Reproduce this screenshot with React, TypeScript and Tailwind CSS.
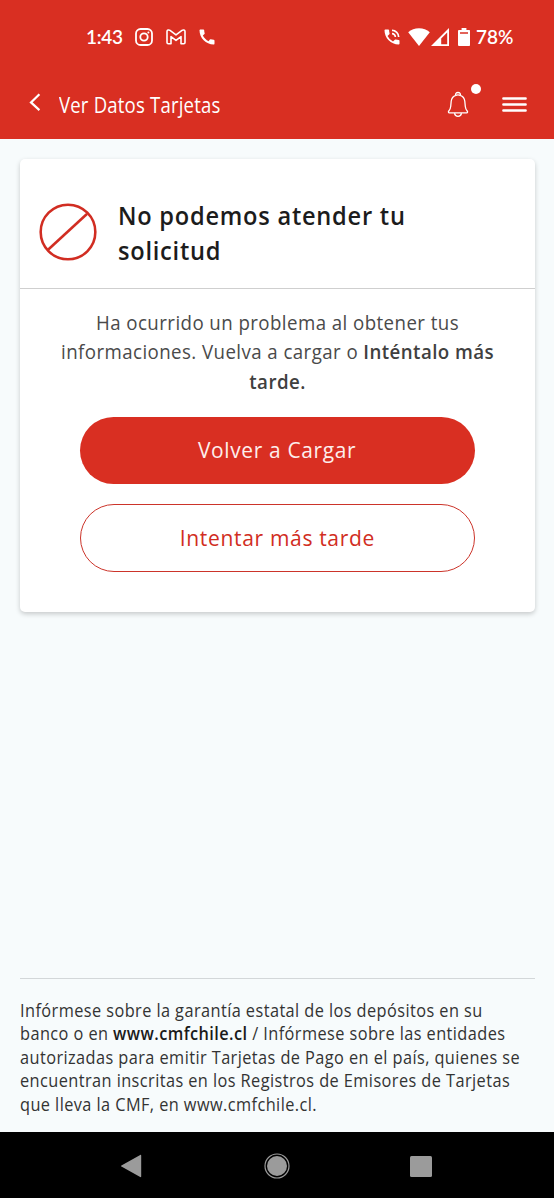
import type { ReactNode } from "react";
import { MdCall, MdPhoneInTalk } from "react-icons/md";

const NOTICE = [
  "Infórmese sobre la garantía estatal de los depósitos en su",
  <>
    banco o en <b className="font-semibold text-[#1a1a1a]">www.cmfchile.cl</b> / Infórmese sobre las entidades
  </>,
  "autorizadas para emitir Tarjetas de Pago en el país, quienes se",
  "encuentran inscritas en los Registros de Emisores de Tarjetas",
  "que lleva la CMF, en www.cmfchile.cl.",
];

function Row({ children }: { children: ReactNode }) {
  return <span className="block whitespace-nowrap">{children}</span>;
}

function StatusBar() {
  return (
    <div className="flex h-[73px] items-center pl-[86px] font-['Lato',sans-serif] text-[19px] font-semibold leading-none text-white">
      <span className="w-[49px] tracking-[-0.3px]">1:43</span>
      {/* instagram */}
      <svg className="h-[18px] w-[18px]" viewBox="0 0 18 18" fill="none" stroke="currentColor" strokeWidth="1.8">
        <rect x="1" y="1" width="16" height="16" rx="4.6" />
        <circle cx="9" cy="9" r="3.7" />
        <circle cx="13.4" cy="4.6" r="1" fill="currentColor" stroke="none" />
      </svg>
      {/* gmail */}
      <svg className="ml-[13px] h-4 w-5" viewBox="0 0 20 16" fill="none" stroke="currentColor" strokeWidth="1.6" strokeLinejoin="round">
        <path d="M1 2.500v11c0 .7.5 1.200 1.200 1.200H5V7.600l5 3.800 5-3.800v7.100h2.800c.7 0 1.200-.5 1.200-1.200v-11c0-1.500-1.800-2-3-1.100l-6 4.500-6-4.500C2.800.5 1 1 1 2.500z" />
      </svg>
      <MdCall className="ml-[11px] h-5 w-5" />
      <MdPhoneInTalk className="ml-[165px] h-5 w-5" />
      {/* wifi */}
      <svg className="ml-[6px] h-[18px] w-[22px]" viewBox="0 0 22 18" fill="currentColor">
        <path d="M11 18 .2 4.300C3.200 1.800 6.800.3 11 .3s7.800 1.500 10.800 4z" />
      </svg>
      {/* signal */}
      <svg className="ml-[1px] h-[18px] w-[18px]" viewBox="0 0 18 18">
        <path fill="currentColor" fillRule="evenodd" d="M18 0v18H0zM16.200 4.400 10.200 10.400V16.200h6z" />
      </svg>
      {/* battery */}
      <svg className="ml-[9px] h-[18px] w-[12px]" viewBox="0 0 12 19" preserveAspectRatio="none">
        <path fill="currentColor" fillRule="evenodd" d="M3.600 0h4.800v2H11c.6 0 1 .4 1 1v15c0 .6-.4 1-1 1H1c-.6 0-1-.4-1-1V3c0-.6.4-1 1-1h2.600zM2 4.500v1.500h8V4.500z" />
      </svg>
      <span className="ml-[6px]">78%</span>
    </div>
  );
}

function AppHeader() {
  return (
    <div className="flex h-[66px] items-start text-white">
      <svg className="ml-[29px] mt-[20px] h-[18px] w-[12px]" viewBox="0 0 12 18" fill="none" stroke="currentColor" strokeWidth="2.2">
        <path d="M10.400 1.200 2 9.400l8.400 7.700" />
      </svg>
      <h1 className="ml-[18px] mt-[17px] w-[388px] origin-left scale-x-[.885] text-[21px] leading-[30px] tracking-[0.2px]">
        Ver Datos Tarjetas
      </h1>
      <div className="relative">
        <svg className="mt-[18px] h-[27px] w-[22px]" viewBox="0 0 22 27" fill="none" stroke="currentColor" strokeWidth="1.3" strokeLinejoin="round">
          <path d="M8.800 4.300C6 5.200 4.500 7.400 4.200 10.200l-.5 5.300c-.2 2-.6 3-1.900 4.500-.6.700-.5 1.900.6 1.900h17.200c1.100 0 1.200-1.200.6-1.900-1.300-1.500-1.700-2.500-1.900-4.500l-.5-5.300c-.3-2.800-1.800-5-4.600-5.900" />
          <path d="M8.800 4.300C8 2.700 9.200 1.500 11 1.500s3 1.200 2.200 2.800c-1.400-.5-3-.5-4.400 0z" />
          <path d="M7.500 22.100c.3 2 1.700 3.200 3.500 3.200s3.200-1.200 3.500-3.200" />
        </svg>
        <span className="absolute left-[23.500px] top-[10.500px] h-[10px] w-[10px] rounded-full bg-white" />
      </div>
      <svg className="ml-[33px] mt-[23px] h-[17px] w-[25px]" viewBox="0 0 25 17" stroke="currentColor" strokeWidth="2.500" strokeLinecap="round">
        <path d="M1.400 2.500h22.200M1.400 8.500h22.200M1.400 14.500h22.200" />
      </svg>
    </div>
  );
}

function ErrorCard() {
  return (
    <section className="mx-5 mr-[19px] h-[453px] rounded-[5px] bg-white shadow-[0_2px_5px_rgba(0,0,0,0.2)]">
      <div className="flex h-[130px] border-b-[1.500px] border-[#cfcfcf]">
        <svg className="ml-[19px] mt-[44px] h-[58px] w-[58px]" viewBox="0 0 59 59" fill="none" stroke="#d12d22" strokeWidth="2.600">
          <circle cx="29.500" cy="29.500" r="27.800" />
          <path d="M9.200 47.500 49 11" />
        </svg>
        <h2 className="ml-[21px] mt-[39px] origin-left scale-x-[.945] text-[25px] font-semibold leading-[35px] tracking-[0.8px] text-[#1c1c1c]">
          <Row>No podemos atender tu</Row>
          <Row>solicitud</Row>
        </h2>
      </div>
      <p className="mt-[19px] scale-x-[.935] text-center text-[20px] leading-[29.500px] tracking-[0.45px] text-[#4a4a4a]">
        <Row>Ha ocurrido un problema al obtener tus</Row>
        <Row>
          informaciones. Vuelva a cargar o <b className="font-semibold text-[#404040]">Inténtalo más</b>
        </Row>
        <Row>
          <b className="font-semibold text-[#404040]">tarde.</b>
        </Row>
      </p>
      <div className="mx-[60px] mt-[20.500px] flex flex-col gap-5 text-[22.500px] tracking-[0.7px]">
        <button className="h-[67.500px] rounded-full bg-[#d92f22] text-[#fdeeec]">
          <span className="inline-block scale-x-[.93]">Volver a Cargar</span>
        </button>
        <button className="h-[67.500px] rounded-full border border-[#cc342a] text-[#d12d22]">
          <span className="inline-block scale-x-[.935]">Intentar más tarde</span>
        </button>
      </div>
    </section>
  );
}

function NavBar() {
  return (
    <nav className="flex h-[66px] items-center bg-black text-[#9b9b9b]">
      <svg className="ml-[120px] mt-[2px] h-6 w-[22px]" viewBox="0 0 22 24" fill="currentColor">
        <path d="M20.200.9c.5-.3 1 0 1 .6v21c0 .6-.5.900-1 .6L1.400 12.600c-.5-.3-.5-.9 0-1.200z" />
      </svg>
      <svg className="ml-[122px] mt-[2px] h-[26px] w-[26px]" viewBox="0 0 26 26" fill="currentColor">
        <circle cx="13" cy="13" r="10" />
        <circle cx="13" cy="13" r="12" fill="none" stroke="currentColor" strokeWidth="1.200" />
      </svg>
      <span className="ml-[120px] mt-[2px] h-[21px] w-[21.500px] rounded-[1.500px] bg-current" />
    </nav>
  );
}

export default function App() {
  return (
    <div className="flex h-[1200px] w-[554px] flex-col overflow-hidden bg-white font-['Open_Sans',sans-serif]">
      <header className="h-[139px] shrink-0 bg-[#d92f22]">
        <StatusBar />
        <AppHeader />
      </header>
      <main className="flex flex-1 flex-col bg-[#f7fbfc] pt-[19.500px]">
        <ErrorCard />
        <footer className="mx-5 mr-[19px] mt-auto h-[154.500px] border-t-[1.500px] border-[#d3d7d9] pt-[20px]">
          <div className="origin-left scale-x-[.933] text-[17.500px] leading-[23.600px] tracking-[0.45px] text-[#333]">
            {NOTICE.map((line, i) => (
              <Row key={i}>{line}</Row>
            ))}
          </div>
        </footer>
      </main>
      <NavBar />
      <div className="h-[2px] shrink-0 bg-white" />
    </div>
  );
}
